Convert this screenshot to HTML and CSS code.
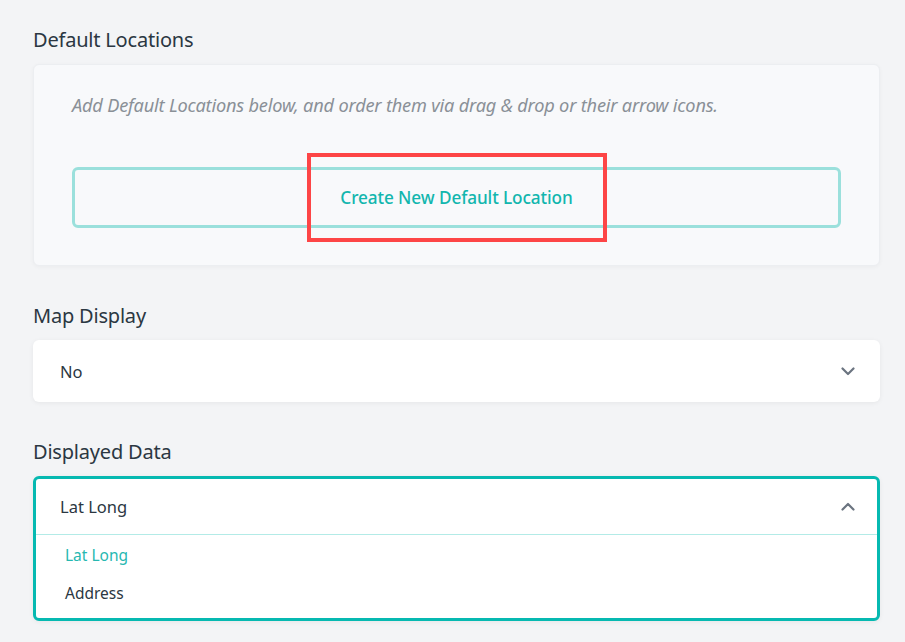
FILE: index.html
```html
<!DOCTYPE html>
<html>
<head>
<meta charset="utf-8">
<link rel="stylesheet" href="styles.css">
</head>
<body>
<div class="page">
  <section class="field">
    <h2 class="label">Default Locations</h2>
    <div class="card">
      <p class="hint">Add Default Locations below, and order them via drag &amp; drop or their arrow icons.</p>
      <div class="btn-wrap">
        <button class="create-btn">Create New Default Location</button>
        <div class="highlight"></div>
      </div>
    </div>
  </section>
  <section class="field">
    <h2 class="label">Map Display</h2>
    <div class="select">
      <span class="value">No</span>
      <svg class="chev" width="14" height="9" viewBox="0 0 14 9"><path d="M1.5 1.5 L7 7 L12.5 1.5" fill="none" stroke="#6b7480" stroke-width="2.2" stroke-linecap="round" stroke-linejoin="round"/></svg>
    </div>
  </section>
  <section class="field">
    <h2 class="label">Displayed Data</h2>
    <div class="dropdown">
      <div class="dd-head">
        <span class="value">Lat Long</span>
        <svg class="chev" width="14" height="9" viewBox="0 0 14 9"><path d="M1.5 7.5 L7 2 L12.5 7.5" fill="none" stroke="#6b7480" stroke-width="2.2" stroke-linecap="round" stroke-linejoin="round"/></svg>
      </div>
      <ul class="options">
        <li class="opt active">Lat Long</li>
        <li class="opt">Address</li>
      </ul>
    </div>
  </section>
</div>
</body>
</html>
```
FILE: styles.css
```css
* { box-sizing: border-box; }
html, body { margin: 0; padding: 0; }
body {
  background: #f3f4f6;
  font-family: "Noto Sans", "Open Sans", sans-serif;
  color: #2b3742;
}
.page {
  padding: 26px 25px 0 33px;
  display: flex;
  flex-direction: column;
}
.field { margin-bottom: 36px; }
.label {
  margin: 0 0 10px 0;
  font-size: 20px;
  font-weight: 400;
  line-height: 28px;
  color: #2b3742;
  letter-spacing: -0.2px;
}
.card {
  background: #f8f9fb;
  border: 1px solid #eceef1;
  border-radius: 6px;
  box-shadow: 0 1px 4px rgba(0,0,0,0.04);
  padding: 28px 38px 37px 38px;
}
.hint {
  margin: 0 0 50px 0;
  font-style: italic;
  font-size: 18.2px;
  line-height: 24px;
  color: #8a9097;
  letter-spacing: -0.2px;
  white-space: nowrap;
}
.btn-wrap { position: relative; }
.create-btn {
  display: block;
  width: 100%;
  height: 61px;
  background: transparent;
  border: 3px solid #9be0dc;
  border-radius: 6px;
  font-family: inherit;
  font-size: 17.2px;
  font-weight: 500;
  color: #12b6ae;
  letter-spacing: -0.1px;
  cursor: pointer;
}
.highlight {
  position: absolute;
  left: 235px;
  top: -14px;
  width: 300px;
  height: 89px;
  border: 4px solid #fd4546;
  pointer-events: none;
}
.select {
  background: #fff;
  border-radius: 6px;
  box-shadow: 0 1px 5px rgba(0,0,0,0.06);
  height: 62px;
  display: flex;
  align-items: center;
  justify-content: space-between;
  padding: 0 25px 0 27px;
}
.value { font-size: 16.5px; color: #2b3742; }
.chev { display: block; }
.dropdown {
  background: #fff;
  border: 3px solid #06b9b1;
  border-radius: 6px;
  box-shadow: 0 1px 5px rgba(0,0,0,0.06);
}
.dd-head {
  height: 56px;
  display: flex;
  align-items: center;
  justify-content: space-between;
  padding: 0 22px 0 24px;
  border-bottom: 1px solid #b3ebe7;
}
.options { list-style: none; margin: 0; padding: 1px 0 6px 0; }
.opt {
  font-size: 15.5px;
  line-height: 38px;
  padding-left: 29px;
  color: #2b3742;
}
.opt.active { color: #27b8b1; }
```
